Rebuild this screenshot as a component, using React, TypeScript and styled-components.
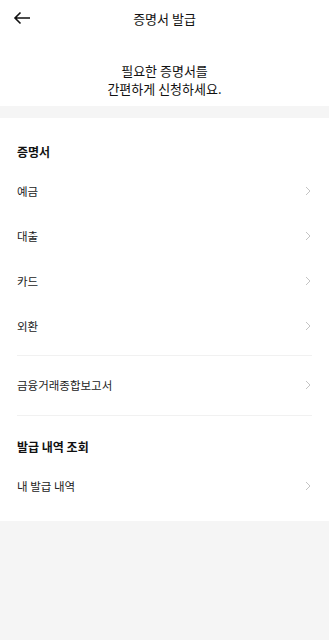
import styled, { createGlobalStyle } from "styled-components";

const Global = createGlobalStyle`
  html, body {
    margin: 0;
    padding: 0;
    background: #f5f5f5;
  }
  body {
    font-family: "Noto Sans CJK KR", "Noto Sans", sans-serif;
    color: #111;
  }
`;

const Page = styled.div`
  width: 329px;
  min-height: 640px;
  background: #f5f5f5;
`;

const Header = styled.header`
  height: 36px;
  display: flex;
  align-items: center;
  justify-content: center;
  position: relative;
  background: #fff;
  font-size: 13px;
  color: #111;
`;

const Back = styled.button`
  position: absolute;
  left: 10px;
  top: 8px;
  width: 24px;
  height: 20px;
  border: 0;
  padding: 0;
  background: none;
  display: flex;
  align-items: center;
  justify-content: center;
`;

const Intro = styled.div`
  background: #fff;
  text-align: center;
  font-size: 13px;
  line-height: 18px;
  padding: 26px 0 8px;
  color: #111;
`;

const Band = styled.div`
  height: 12px;
`;

const Card = styled.section`
  background: #fff;
  padding: 16px 17px 13px;
`;

const SectionTitle = styled.h2`
  margin: 0;
  font-size: 12px;
  font-weight: 700;
  height: 34px;
  display: flex;
  align-items: center;
`;

const Row = styled.div`
  height: 45px;
  display: flex;
  align-items: center;
  justify-content: space-between;
  font-size: 11.5px;
  color: #222;
`;

const Divider = styled.hr<{ $top: number; $bottom: number }>`
  border: 0;
  border-top: 1px solid #f1f1f1;
  margin: ${(p) => p.$top}px 0 ${(p) => p.$bottom}px;
`;

const Chevron = () => (
  <svg width="8" height="10" viewBox="0 0 8 10">
    <path d="M2 1l4 4-4 4" fill="none" stroke="#bdbdbd" strokeWidth="0.9" />
  </svg>
);

const Item = ({ label }: { label: string }) => (
  <Row>
    <span>{label}</span>
    <Chevron />
  </Row>
);

export default function App() {
  return (
    <Page>
      <Global />
      <Header>
        <Back aria-label="back">
          <svg width="18" height="14" viewBox="0 0 18 14">
            <path
              d="M17 7H2M7.5 1.5L2 7l5.5 5.5"
              fill="none"
              stroke="#111"
              strokeWidth="1.6"
            />
          </svg>
        </Back>
        증명서 발급
      </Header>
      <Intro>
        필요한 증명서를
        <br />
        간편하게 신청하세요.
      </Intro>
      <Band />
      <Card>
        <SectionTitle>증명서</SectionTitle>
        {["예금", "대출", "카드", "외환"].map((l) => (
          <Item key={l} label={l} />
        ))}
        <Divider $top={7} $bottom={6} />
        <Item label="금융거래종합보고서" />
        <Divider $top={8} $bottom={13} />
        <SectionTitle>발급 내역 조회</SectionTitle>
        <Item label="내 발급 내역" />
      </Card>
    </Page>
  );
}
